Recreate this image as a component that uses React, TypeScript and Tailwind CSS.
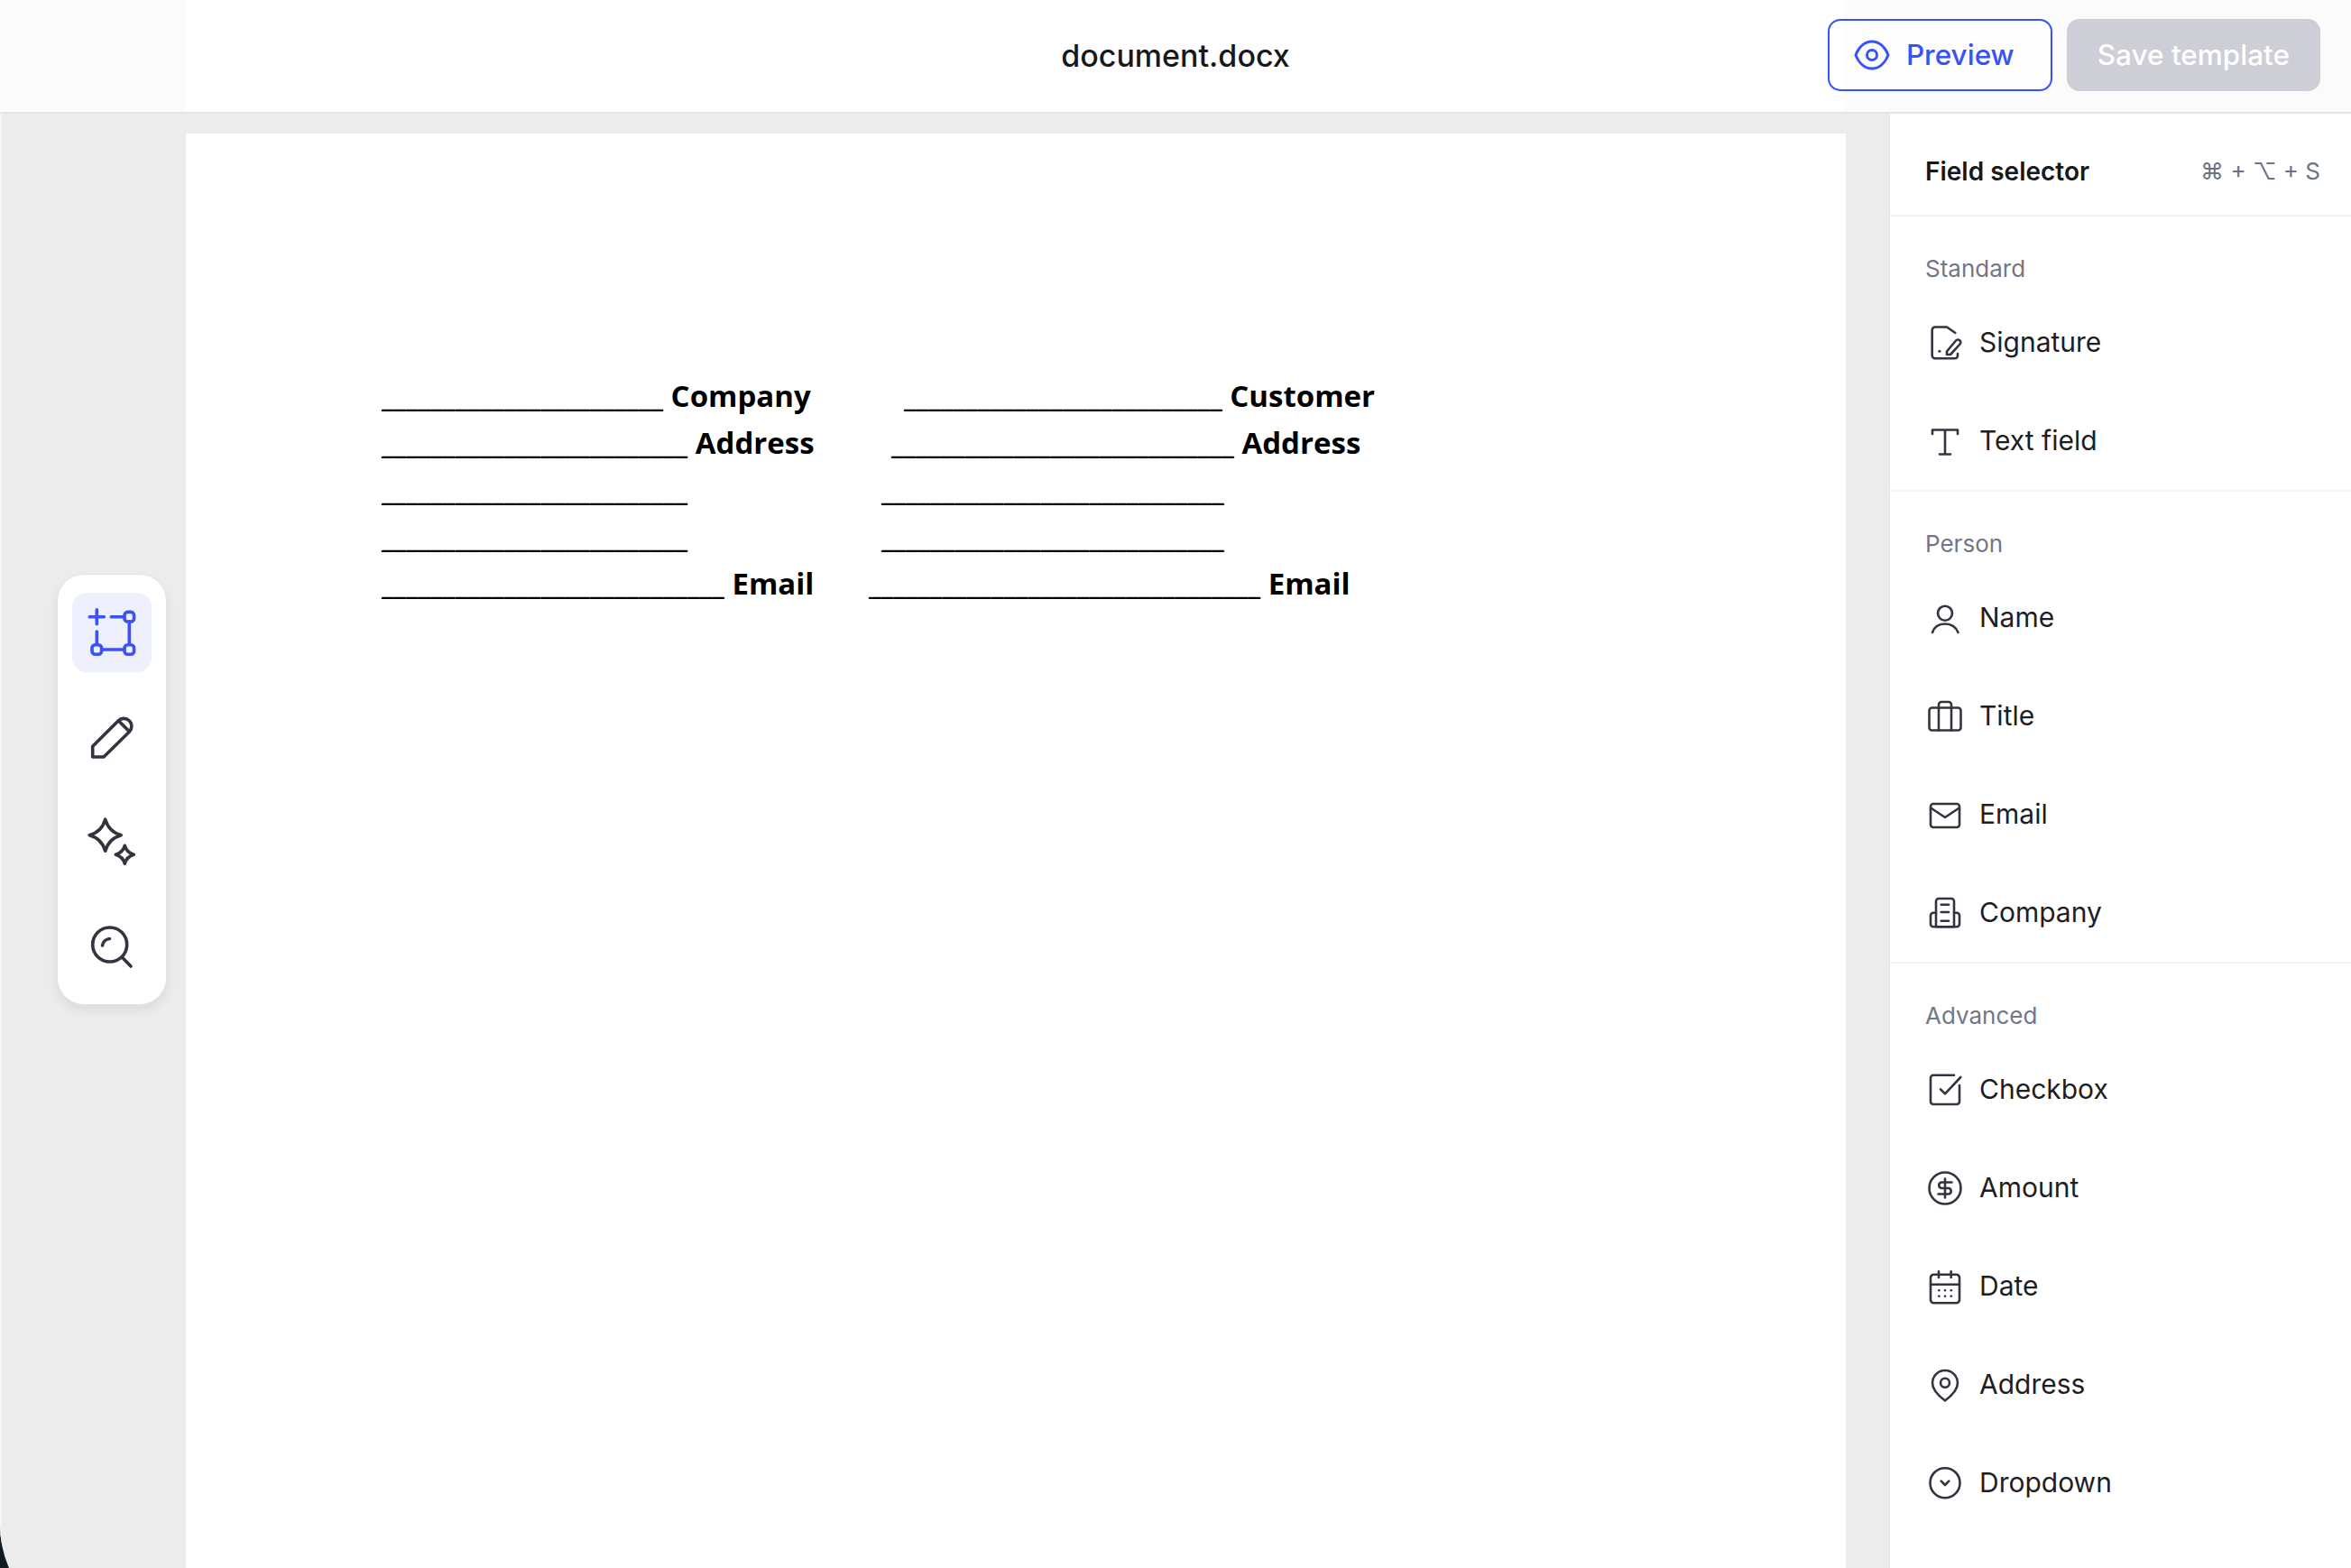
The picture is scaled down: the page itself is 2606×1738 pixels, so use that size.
import React from "react";

const S = "fill-none stroke-[#32343f] stroke-[2.6px] [stroke-linecap:round] [stroke-linejoin:round]";

function Ico({ children }: { children: React.ReactNode }) {
  return (
    <svg viewBox="0 0 40 40" className={`w-10 h-10 shrink-0 ${S}`}>
      {children}
    </svg>
  );
}

const icons: Record<string, React.ReactNode> = {
  Signature: (
    <>
      <path d="M22 2.5H9A3.3 3.3 0 0 0 5.7 5.8V34A3.3 3.3 0 0 0 9 37.3H31A3 3 0 0 0 34 34.3V32M22 2.5L31.3 9" />
      <path d="M22 33V29.5L32 17.5A3 3 0 0 1 36.5 21.5L26 33Z" />
      <path d="M13.6 29.4H14.2" />
    </>
  ),
  "Text field": <path d="M6 12V7.5H34V12M20 7.5V34.5M14 34.5H26" />,
  Name: (
    <>
      <circle cx="20" cy="14.7" r="8" />
      <path d="M6 36C8 30 13 26.5 20 26.5S32 30 34.5 36" />
    </>
  ),
  Title: (
    <>
      <rect x="2.5" y="10.5" width="35" height="25" rx="3" />
      <path d="M13 35.5V7A3 3 0 0 1 16 4H24A3 3 0 0 1 27 7V35.5" />
    </>
  ),
  Email: (
    <>
      <rect x="4" y="8" width="32" height="26" rx="3" />
      <path d="M5 13L20 23L35 13" />
    </>
  ),
  Company: (
    <>
      <path d="M10 35.3V7A3 3 0 0 1 13 4H27A3 3 0 0 1 30 7V35.3Z" />
      <path d="M10 19.7H7A3 3 0 0 0 4 22.7V32.3A3 3 0 0 0 7 35.3H33A3 3 0 0 0 36 32.3V22.7A3 3 0 0 0 33 19.7H30" />
      <path d="M15.7 10.7H24M15.7 19H24M15.7 28.7H24" />
    </>
  ),
  Checkbox: (
    <>
      <path d="M30 3.7H7A3 3 0 0 0 4 6.7V33A3 3 0 0 0 7 36H33A3 3 0 0 0 36 33V15" />
      <path d="M15 19.3L20 24.3L37.3 6" />
    </>
  ),
  Amount: (
    <>
      <circle cx="20" cy="20" r="17.5" />
      <path d="M27.5 13.5H16A3.3 3.3 0 0 0 16 20H24A3.3 3.3 0 0 1 24 26.5H12.5M20 9.5V30.5" />
    </>
  ),
  Date: (
    <>
      <rect x="4" y="6.7" width="32" height="31.6" rx="3.5" />
      <path d="M13 3.3V10M26.7 3.3V10M4 17.7H36" />
      <path d="M13.3 24.3H13.4M20 24.3H20.1M26.7 24.3H26.8M13.3 30.7H13.4M20 30.7H20.1M26.7 30.7H26.8" />
    </>
  ),
  Address: (
    <>
      <path d="M20 37.5C14 33 6 26 6 18A14 14 0 0 1 34 18C34 26 26 33 20 37.5Z" />
      <circle cx="20" cy="17.7" r="5" />
    </>
  ),
  Dropdown: (
    <>
      <circle cx="20" cy="19.7" r="16.5" />
      <path d="M15.7 17.7L20 22L24.3 17.7" />
    </>
  ),
};

function star(c: number, r: number) {
  const k = r * 0.22;
  return `M${c} ${c - r}Q${c + k} ${c - k} ${c + r} ${c}Q${c + k} ${c + k} ${c} ${c + r}Q${c - k} ${c + k} ${c - r} ${c}Q${c - k} ${c - k} ${c} ${c - r}Z`;
}

function Tool({ active, children }: { active?: boolean; children: React.ReactNode }) {
  return (
    <div className={`w-[88px] h-[88px] rounded-2xl flex items-center justify-center ${active ? "bg-[#eef1fd]" : ""}`}>
      <svg
        viewBox="0 0 56 56"
        className={`w-14 h-14 fill-none stroke-[3.6px] [stroke-linecap:round] [stroke-linejoin:round] ${active ? "stroke-[#3b52f6]" : "stroke-[#32343f]"}`}
      >
        {children}
      </svg>
    </div>
  );
}

function Section({ label, rows, last }: { label: string; rows: string[]; last?: boolean }) {
  return (
    <div className={`pt-[42px] ${last ? "" : "border-b-2 border-[#f3f3f3]"}`}>
      <div className="pl-[39px] h-8 mb-[11px] text-[26px] leading-8 text-[#737686]">{label}</div>
      {rows.map((r) => (
        <div key={r} className="h-[109px] pl-[41px] flex items-center gap-[18px]">
          <Ico>{icons[r]}</Ico>
          <span className="text-[30px] text-[#1d1e24]">{r}</span>
        </div>
      ))}
    </div>
  );
}

const docRows = [
  { l: "_______________________ Company", pad: "pl-[39px]", r: "__________________________ Customer" },
  { l: "_________________________ Address", pad: "pl-[25px]", r: "____________________________ Address" },
  { l: "_________________________", pad: "pl-[14px]", r: "____________________________" },
  { l: "_________________________", pad: "pl-[14px]", r: "____________________________" },
  { l: "____________________________ Email", pad: "pl-0", r: "________________________________ Email" },
];

export default function App() {
  return (
    <div className="w-[2606px] h-[1738px] overflow-hidden bg-[#0e1c1f] font-['Inter',sans-serif]">
      <div className="h-[1810px] rounded-bl-[120px] overflow-hidden bg-[#ececec] flex flex-col">
        <header className="h-[126px] shrink-0 pb-[2px] flex items-center border-b-2 border-[#e5e5e5] bg-[linear-gradient(90deg,#fbfbfb_205px,#ffffff_205px,#ffffff_2044px,#fbfbfb_2044px)]">
          <div className="flex-1 pl-[34px]" />
          <div className="text-[34px] font-medium text-[#17181c]">document.docx</div>
          <div className="flex-1 flex justify-end gap-4 pr-[34px]">
            <button className="h-20 pl-[27px] pr-[40px] flex items-center gap-[18px] rounded-[14px] border-2 border-[#3652fb] bg-white/60 text-[31.5px] font-medium text-[#3652fb]">
              <svg viewBox="0 0 40 40" className="w-10 h-10 fill-none stroke-[#3652fb] stroke-[3px]">
                <path d="M2 20C6 10 13 5 20 5S34 10 38 20C34 30 27 35 20 35S6 30 2 20Z" />
                <circle cx="20" cy="20" r="5.5" />
              </svg>
              Preview
            </button>
            <button className="h-20 px-[34px] rounded-[14px] bg-[#cdced6] text-[31.5px] font-medium text-white">Save template</button>
          </div>
        </header>
        <div className="flex-1 flex min-h-0">
          <main className="relative flex-1 pl-[206px] pr-[48px] pt-[22px] overflow-hidden shadow-[inset_2px_0_0_#f5f5f5]">
            <div className="h-full bg-white pl-[217px] pt-[265px] font-['Open_Sans',sans-serif] font-bold text-[33px] leading-[52px] text-black">
              {docRows.map((row, i) => (
                <div key={i} className="flex whitespace-pre">
                  <div className="w-[540px] shrink-0">{row.l}</div>
                  <div className={row.pad}>{row.r}</div>
                </div>
              ))}
            </div>
            <div className="absolute left-[63px] top-[510px] w-[122px] py-5 flex flex-col items-center gap-7 rounded-[30px] bg-white border border-[#e4e4e4] shadow-[0_6px_12px_rgba(0,0,0,0.07)]">
              <Tool active>
                <path d="M11.3 2.7V18.7M3.3 10.7H19.3M27.3 10.7H42M11.3 27V41M17 47H42M47.3 16V41" />
                <rect x="42" y="5.4" width="10.6" height="10.6" rx="3.5" />
                <rect x="6" y="41.7" width="10.6" height="10.6" rx="3.5" />
                <rect x="42" y="41.7" width="10.6" height="10.6" rx="3.5" />
              </Tool>
              <Tool>
                <path d="M6.7 38.3L35 10A8 8 0 0 1 47.5 22L19 50H6.7ZM35.5 10L46.5 21" />
              </Tool>
              <Tool>
                <path d={star(20.7, 17.5)} />
                <path d={star(42.3, 10)} />
              </Tool>
              <Tool>
                <circle cx="25.7" cy="26" r="19" />
                <path d="M40 40.7L49 50M17.5 27A9 9 0 0 1 25.5 19.5" />
              </Tool>
            </div>
          </main>
          <aside className="w-[512px] shrink-0 bg-white border-l border-[#e6e6e6]">
            <div className="h-[114px] pt-[15px] flex items-center justify-between pl-[39px] pr-[34px] border-b-2 border-[#f3f3f3]">
              <span className="text-[28px] font-semibold text-[#17181c]">Field selector</span>
              <span className="text-[26px] text-[#6f7280] font-['Inter','DejaVu_Sans',sans-serif]">⌘ + ⌥ + S</span>
            </div>
            <Section label="Standard" rows={["Signature", "Text field"]} />
            <Section label="Person" rows={["Name", "Title", "Email", "Company"]} />
            <Section label="Advanced" rows={["Checkbox", "Amount", "Date", "Address", "Dropdown"]} last />
          </aside>
        </div>
      </div>
    </div>
  );
}
